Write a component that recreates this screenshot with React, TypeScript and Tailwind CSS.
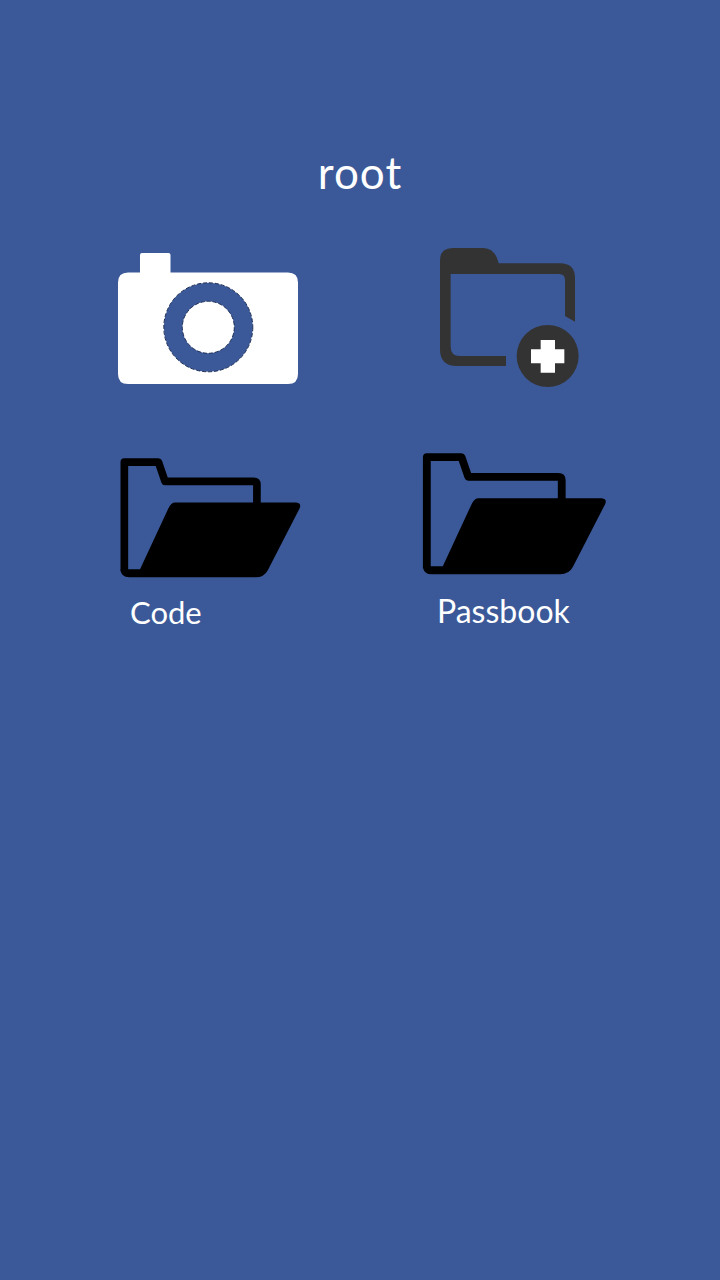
function Camera() {
  return (
    <svg viewBox="0 0 180 131" className="block w-[180px] h-[131px] blur-[0.5px]">
      <path fill="#fff" d="M24 0H50.500Q52.500 0 52.500 2V19.500H170Q180 19.500 180 29.500V121Q180 131 170 131H10Q0 131 0 121V29.500Q0 19.500 10 19.500H22V2Q22 0 24 0Z" />
      <circle cx="90.300" cy="74.300" r="44.500" fill="#3b5998" stroke="#1f2f55" strokeWidth="1" strokeDasharray="4 2" />
      <circle cx="90.300" cy="74.300" r="26" fill="#fff" stroke="#1f2f55" strokeWidth="1" strokeDasharray="4 2" />
    </svg>
  );
}

function FolderPlus() {
  return (
    <svg viewBox="60 54 420 420" className="block w-[140px] h-[140px] blur-[0.5px]">
      <path
        fill="#333333"
        d="M60 92Q60 54 98 54H190Q225 54 236 100H420Q465 100 465 145V275L435 258V150Q435 132 417 132H92V350Q92 378 120 378H258V408H110Q60 408 60 358Z"
      />
      <circle cx="383" cy="378" r="93" fill="#333333" />
      <path fill="#fff" d="M362 330H405V358H433V400H405V428H362V400H333V358H362Z" />
    </svg>
  );
}

function OpenFolder({ className }: { className: string }) {
  return (
    <svg viewBox="60 55 542 362" className={className}>
      <path
        fill="none"
        stroke="#000"
        strokeWidth="23"
        strokeLinejoin="round"
        d="M73 395V67H175L195 125H460Q470 125 470 135V195"
      />
      <path
        fill="#000"
        d="M225 188H588Q604 190 598 205L503 390Q492 412 465 412H88Q62 412 62 388H120L205 205Q213 188 225 188Z"
      />
    </svg>
  );
}

export default function App() {
  return (
    <div className="min-h-[1280px] bg-[#3b5998] pt-[145px] text-white [font-family:Lato,'Open_Sans',sans-serif]">
      <h1 className="text-center text-[44px] leading-[54px] font-normal tracking-[1px]">root</h1>
      <div className="mt-[49px] pl-[118px] grid grid-cols-[302px_1fr]">
        <div className="pt-[5px]">
          <Camera />
        </div>
        <div className="pl-[20px]">
          <FolderPlus />
        </div>
        <div className="pl-[2px] pt-[70px]">
          <OpenFolder className="block w-[181px] h-[121px] blur-[0.5px]" />
          <p className="mt-[13px] ml-[10px] text-[31px] leading-[40px]">Code</p>
        </div>
        <div className="pl-[2px] pt-[65px]">
          <OpenFolder className="block w-[185px] h-[123px] blur-[0.5px]" />
          <p className="mt-[15px] ml-[15px] text-[32px] leading-[40px]">Passbook</p>
        </div>
      </div>
    </div>
  );
}
